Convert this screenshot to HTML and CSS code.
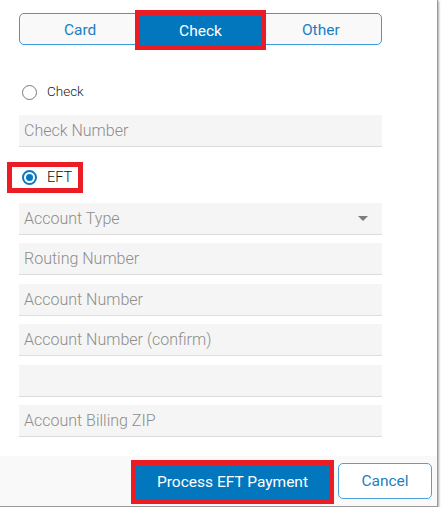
FILE: index.html
```html
<!DOCTYPE html>
<html>
<head>
<meta charset="utf-8">
<link rel="stylesheet" href="styles.css">
</head>
<body>
<div class="modal">
  <div class="content">
    <div class="seg">
      <div class="seg-btn">Card</div>
      <div class="seg-btn active mark">Check</div>
      <div class="seg-btn">Other</div>
    </div>

    <label class="radio-row first">
      <span class="radio"></span>
      <span class="radio-label">Check</span>
    </label>
    <div class="field first-field"><span class="ph">Check Number</span></div>

    <label class="radio-row eft">
      <span class="radio checked"></span>
      <span class="radio-label">EFT</span>
    </label>

    <div class="fields">
      <div class="field select"><span class="ph">Account Type</span><span class="caret"></span></div>
      <div class="field"><span class="ph">Routing Number</span></div>
      <div class="field"><span class="ph">Account Number</span></div>
      <div class="field"><span class="ph">Account Number (confirm)</span></div>
      <div class="field"></div>
      <div class="field"><span class="ph">Account Billing ZIP</span></div>
    </div>
  </div>
  <div class="footer">
    <div class="btn primary mark">Process EFT Payment</div>
    <div class="btn secondary">Cancel</div>
  </div>
</div>
</body>
</html>
```

FILE: styles.css
```css
* { box-sizing: border-box; }
html, body { margin: 0; padding: 0; background: #fff; }
body { font-family: Roboto, "Liberation Sans", sans-serif; }

.modal {
  width: 438px;
  height: 507px;
  background: #fff;
  border-right: 1px solid #9a9a9a;
  border-bottom: 1px solid #9a9a9a;
  box-shadow: 1px 1px 2px rgba(0,0,0,0.35);
  display: flex;
  flex-direction: column;
  justify-content: space-between;
}

.content {
  padding: 13px 0 0 19px;
  width: 382px;
}

.seg {
  display: flex;
  height: 32px;
  border: 1px solid #3e9ad8;
  border-radius: 5px;
  background: #f9f9f9;
}
.seg-btn {
  flex: 1;
  display: flex;
  align-items: center;
  justify-content: center;
  font-size: 15.5px;
  color: #1c7fc3;
  padding-top: 1px;
}
.seg-btn.active {
  background: #0277bd;
  color: #fff;
  margin: 1px 0 -1px;
}
.mark { outline: 5px solid #ec1c24; }

.radio-row {
  display: flex;
  align-items: center;
  height: 20px;
  gap: 10px;
  margin-left: 3px;
}
.radio-row.first { margin-top: 36px; }
.radio {
  width: 15px;
  height: 15px;
  border-radius: 50%;
  border: 1.5px solid #7a7a7a;
  display: flex;
  align-items: center;
  justify-content: center;
  margin-top: 2px;
}
.radio.checked { border: 2px solid #0a78c0; margin-top: 0; }
.radio.checked::after {
  content: "";
  width: 7px;
  height: 7px;
  border-radius: 50%;
  background: #0a78c0;
}
.radio-label { font-size: 13.5px; font-weight: 300; color: #222; }

.radio-row.eft {
  margin: 15px 0 0 -12px;
  width: 76px;
  height: 31px;
  padding-left: 10px;
  border: 5px solid #ec1c24;
}
.radio-row.eft .radio-label { font-size: 14.5px; color: #111; }

.field {
  width: 363px;
  height: 32px;
  background: #f5f5f5;
  border-bottom: 1px solid #dcdcdc;
  display: flex;
  align-items: center;
  padding: 0 5px;
  justify-content: space-between;
}
.first-field { margin-top: 14px; }
.ph {
  font-size: 16px;
  font-weight: 300;
  color: #8d8d8d;
}
.fields {
  margin-top: 10px;
  display: flex;
  flex-direction: column;
  gap: 8.4px;
}
.caret {
  width: 0;
  height: 0;
  border-left: 5px solid transparent;
  border-right: 5px solid transparent;
  border-top: 5px solid #7d7d7d;
  margin-right: 9px;
}

.footer {
  height: 50px;
  background: #f9f9f9;
  display: flex;
  justify-content: flex-end;
  align-items: flex-end;
  gap: 9px;
  padding: 0 5px 7px 0;
}
.btn {
  display: flex;
  align-items: center;
  justify-content: center;
  font-size: 15.5px;
}
.btn.primary {
  width: 193px;
  height: 34px;
  background: #0277bd;
  color: #fff;
}
.btn.secondary {
  width: 94px;
  height: 36px;
  background: #fff;
  border: 1px solid #4ba2de;
  border-radius: 5px;
  color: #1c7fc3;
}
```
